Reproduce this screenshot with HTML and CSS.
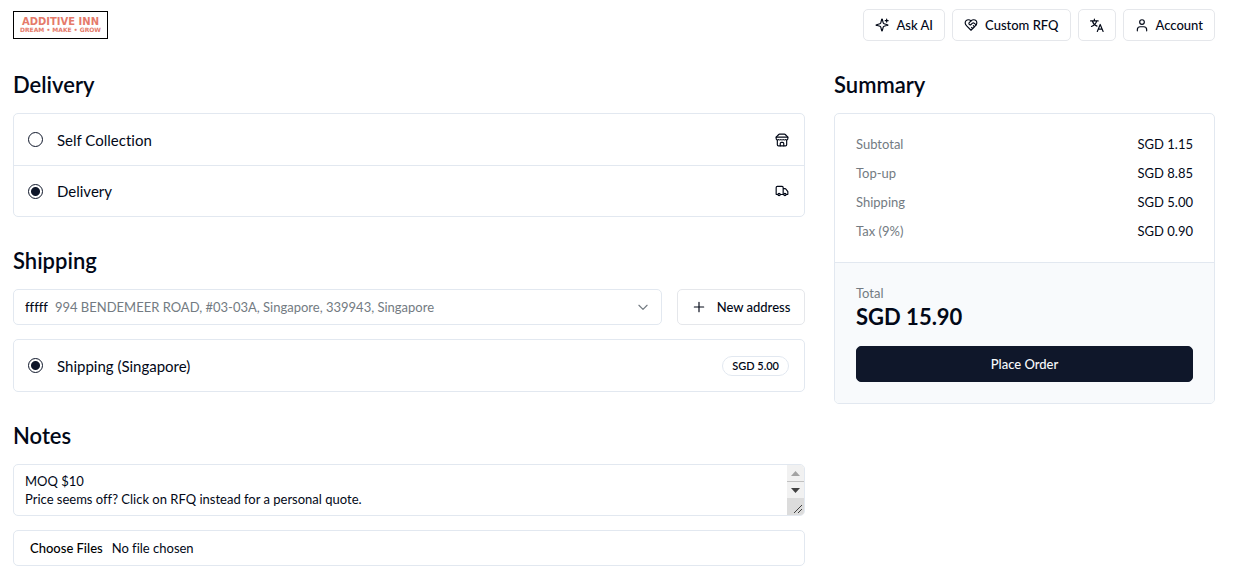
FILE: index.html
```html
<!DOCTYPE html>
<html lang="en">
<head>
  <meta charset="UTF-8">
  <title>Checkout | Additive Inn</title>
  <meta name="viewport" content="width=device-width, initial-scale=1.0">
  <link rel="stylesheet" href="styles.css">
</head>
<body>
  <header class="topbar">
    <a href="#" class="logo">
      <span class="logo-name">ADDITIVE INN</span>
      <span class="logo-tagline">DREAM • MAKE • GROW</span>
    </a>

    <nav class="topbar-actions">
      <button type="button" class="btn">
        <svg class="icon" viewBox="0 0 24 24"><path d="M9.9 15.5A2 2 0 0 0 8.5 14.1l-6.1-1.6a.5.5 0 0 1 0-1L8.5 9.9A2 2 0 0 0 9.9 8.5l1.6-6.1a.5.5 0 0 1 1 0l1.6 6.1a2 2 0 0 0 1.4 1.4l6.1 1.6a.5.5 0 0 1 0 1l-6.1 1.6a2 2 0 0 0-1.4 1.4l-1.6 6.1a.5.5 0 0 1-1 0z"/><path d="M20 2v5M22.500 4.500h-5"/></svg>
        Ask AI
      </button>
      <button type="button" class="btn">
        <svg class="icon" viewBox="0 0 24 24"><path d="M19 14c1.49-1.46 3-3.21 3-5.5A5.5 5.5 0 0 0 16.5 3c-1.76 0-3 .5-4.5 2-1.5-1.5-2.74-2-4.5-2A5.5 5.5 0 0 0 2 8.5c0 2.3 1.5 4.05 3 5.5l7 7Z"/><path d="M12 5 9.04 7.96a2.17 2.17 0 0 0 0 3.08c.82.82 2.13.85 3 .07l2.07-1.9a2.82 2.82 0 0 1 3.79 0l2.96 2.66M18 15l-2-2M15 18l-2-2"/></svg>
        Custom RFQ
      </button>
      <button type="button" class="btn btn-icon" aria-label="Language">
        <svg class="icon" viewBox="0 0 24 24"><path d="M1 5h13M7.500 2v3M11.500 5c-1 4-4 7.500-9 9.500M4 5c1 4 4 7.500 8 9M12.500 23l5-12 5 12M14.200 19h6.600"/></svg>
      </button>
      <button type="button" class="btn">
        <svg class="icon" viewBox="0 0 24 24"><path d="M20 22v-2a5 5 0 0 0-5-5H9a5 5 0 0 0-5 5v2"/><circle cx="12" cy="7" r="4"/></svg>
        Account
      </button>
    </nav>
  </header>

  <main class="checkout">
    <form class="details" id="checkoutForm">
      <section class="section">
        <h2>Delivery</h2>
        <div class="card">
          <label class="option">
            <input type="radio" name="delivery" value="self">
            <span class="option-name">Self Collection</span>
            <svg class="icon" viewBox="0 0 24 24"><path d="m2 7 4.400-4.400A2 2 0 0 1 7.800 2h8.400a2 2 0 0 1 1.400.600L22 7"/><path d="M4 12v8a2 2 0 0 0 2 2h12a2 2 0 0 0 2-2v-8"/><path d="M15 22v-4a2 2 0 0 0-2-2h-2a2 2 0 0 0-2 2v4"/><path d="M2 7h20v3a2 2 0 0 1-2 2 2.700 2.700 0 0 1-1.600-.600.700.700 0 0 0-.800 0A2.700 2.700 0 0 1 16 12a2.700 2.700 0 0 1-1.600-.600.700.700 0 0 0-.800 0A2.700 2.700 0 0 1 12 12a2.700 2.700 0 0 1-1.600-.600.700.700 0 0 0-.800 0A2.700 2.700 0 0 1 8 12a2.700 2.700 0 0 1-1.600-.600.700.700 0 0 0-.800 0A2.700 2.700 0 0 1 4 12a2 2 0 0 1-2-2z"/></svg>
          </label>
          <label class="option">
            <input type="radio" name="delivery" value="delivery" checked>
            <span class="option-name">Delivery</span>
            <svg class="icon" viewBox="0 0 24 24"><path d="M14 18V6a2 2 0 0 0-2-2H4a2 2 0 0 0-2 2v11a1 1 0 0 0 1 1h2M15 18H9M19 18h2a1 1 0 0 0 1-1v-3.650a1 1 0 0 0-.220-.624l-3.480-4.350A1 1 0 0 0 17.520 8H14"/><circle cx="17" cy="18" r="2"/><circle cx="7" cy="18" r="2"/></svg>
          </label>
        </div>
      </section>

      <section class="section">
        <h2>Shipping</h2>
        <div class="address-row">
          <div class="field address">
            <label for="address">fffff</label>
            <select id="address">
              <option>994 BENDEMEER ROAD, #03-03A, Singapore, 339943, Singapore</option>
            </select>
            <svg class="icon chevron" viewBox="0 0 24 24"><path d="m5 9 7 7 7-7"/></svg>
          </div>
          <button type="button" class="btn btn-address">
            <svg class="icon" viewBox="0 0 24 24"><path d="M4 12h16M12 4v16"/></svg>
            New address
          </button>
        </div>
        <div class="card">
          <label class="option">
            <input type="radio" name="shipping" value="singapore" checked>
            <span class="option-name">Shipping (Singapore)</span>
            <span class="badge">SGD 5.00</span>
          </label>
        </div>
      </section>

      <section class="section">
        <h2 id="notesTitle">Notes</h2>
        <div class="field notes">
          <textarea rows="2" aria-labelledby="notesTitle">
MOQ $10
Price seems off? Click on RFQ instead for a personal quote.
</textarea>
          <div class="scrollbar" aria-hidden="true">
            <svg class="arrow arrow-disabled" viewBox="0 0 17 16"><path d="M4 11h9L8.500 6z"/></svg>
            <svg class="arrow" viewBox="0 0 17 16"><path d="M4 6h9l-4.500 5z"/></svg>
            <svg class="grip" viewBox="0 0 17 17"><path d="M7 15l8-8M11 15l4-4"/></svg>
          </div>
        </div>
        <input type="file" class="field files" aria-label="Attachments" multiple>
      </section>
    </form>

    <aside class="section">
      <h2>Summary</h2>
      <div class="card">
        <dl class="lines">
          <div><dt>Subtotal</dt><dd>SGD 1.15</dd></div>
          <div><dt>Top-up</dt><dd>SGD 8.85</dd></div>
          <div><dt>Shipping</dt><dd>SGD 5.00</dd></div>
          <div><dt>Tax (9%)</dt><dd>SGD 0.90</dd></div>
        </dl>
        <div class="total">
          <p class="total-label">Total</p>
          <p class="total-amount">SGD 15.90</p>
          <button type="submit" form="checkoutForm" class="btn btn-primary">Place Order</button>
        </div>
      </div>
    </aside>
  </main>
</body>
</html>
```
FILE: styles.css
```css
* {
  box-sizing: border-box;
}

body {
  margin: 0;
  padding: 0 18px 15px 13px;
  background-color: #fff;
  color: #020817;
  font-family: Lato, sans-serif;
  font-size: 13px;
  font-variant-ligatures: none;
  line-height: 18px;
}

h2, p, dl, dd {
  margin: 0;
}

h2 {
  font-size: 22px;
  font-weight: 600;
  line-height: 29px;
}

button, select, textarea, input {
  font: inherit;
  color: inherit;
}

/* Header */
.topbar {
  display: flex;
  align-items: center;
  justify-content: space-between;
  height: 50px;
}

.topbar-actions {
  display: flex;
  gap: 7px;
}

.logo {
  display: flex;
  flex-direction: column;
  align-items: center;
  padding: 5px 6px;
  border: 1px solid #000;
  color: #e57a6a;
  font-family: "DejaVu Sans", sans-serif;
  font-weight: bold;
  text-decoration: none;
}

.logo-name {
  font-size: 10px;
  line-height: 9px;
}

.logo-tagline {
  font-size: 6px;
  line-height: 7px;
}

.icon {
  flex: none;
  width: 14px;
  height: 14px;
  fill: none;
  stroke: currentColor;
  stroke-width: 2;
  stroke-linecap: round;
  stroke-linejoin: round;
}

.btn {
  display: flex;
  align-items: center;
  justify-content: center;
  gap: 7px;
  height: 32px;
  padding: 0 11px;
  background-color: #fff;
  border: 1px solid #e5e7eb;
  border-radius: 5px;
  font-weight: 500;
  cursor: pointer;
}

.btn-icon {
  width: 38px;
}

/* Layout */
.checkout {
  display: grid;
  grid-template-columns: minmax(0, 1fr) 381px;
  align-items: start;
  gap: 29px;
  padding-top: 20px;
}

.details {
  display: flex;
  flex-direction: column;
  gap: 29px;
}

.section {
  display: flex;
  flex-direction: column;
  gap: 14px;
}

.card {
  overflow: hidden;
  border: 1px solid #e2e8f0;
  border-radius: 5px;
}

/* Radio options */
.option {
  display: flex;
  align-items: center;
  gap: 14px;
  min-height: 51px;
  padding: 0 15px 0 14px;
  font-size: 15px;
  cursor: pointer;
}

.option + .option {
  border-top: 1px solid #e2e8f0;
}

.option input {
  appearance: none;
  flex: none;
  width: 15px;
  height: 15px;
  margin: 0;
  border: 1px solid #0f172a;
  border-radius: 50%;
}

.option input:checked {
  background: radial-gradient(circle, #0f172a 4px, transparent 5px);
}

.option-name {
  flex: 1;
}

.badge {
  padding: 0 9px;
  border: 1px solid #e2e8f0;
  border-radius: 10px;
  font-size: 11px;
  font-weight: 600;
}

/* Fields */
.field {
  width: 100%;
  border: 1px solid #e2e8f0;
  border-radius: 5px;
  background-color: #fff;
}

.address-row {
  display: flex;
  gap: 15px;
}

.address {
  display: flex;
  align-items: center;
  flex: 1;
  gap: 7px;
  height: 36px;
  padding: 0 11px;
}

.address label {
  font-weight: 500;
}

.address select {
  appearance: none;
  flex: 1;
  min-width: 0;
  padding: 0;
  border: none;
  background: none;
  color: #737b82;
}

.chevron {
  color: #737b82;
}

.btn-address {
  gap: 11px;
  width: 128px;
  height: 36px;
}

.notes {
  display: flex;
  overflow: hidden;
}

.notes textarea {
  display: block;
  flex: 1;
  min-width: 0;
  height: 50px;
  padding: 7px 11px;
  border: none;
  background: none;
  resize: none;
}

.scrollbar {
  display: flex;
  flex-direction: column;
  width: 17px;
  background-color: #f1f1f1;
}

.arrow {
  height: 16px;
  fill: #404040;
}

.arrow-disabled {
  height: 17px;
  border-bottom: 1px solid #c1c1c1;
  fill: #a3a3a3;
}

.grip {
  height: 17px;
  background-color: #dcdcdc;
  stroke: #404040;
}

.files {
  height: 36px;
  padding: 8px 11px;
}

.files::file-selector-button {
  margin: 0 9px 0 0;
  padding: 0 0 0 5px;
  border: none;
  background: none;
  font: inherit;
  font-weight: 500;
}

/* Summary */
.lines {
  display: flex;
  flex-direction: column;
  gap: 11px;
  padding: 21px 21px 22px;
}

.lines div {
  display: flex;
  justify-content: space-between;
}

.lines dt, .total-label {
  color: #737b82;
}

.total {
  padding: 21px;
  border-top: 1px solid #e2e8f0;
  background-color: #f8fafc;
}

.total-amount {
  margin-bottom: 15px;
  font-size: 22px;
  font-weight: 700;
  line-height: 29px;
}

.btn-primary {
  width: 100%;
  height: 36px;
  border-color: #0f172a;
  background-color: #0f172a;
  color: #f8fafc;
}
```
